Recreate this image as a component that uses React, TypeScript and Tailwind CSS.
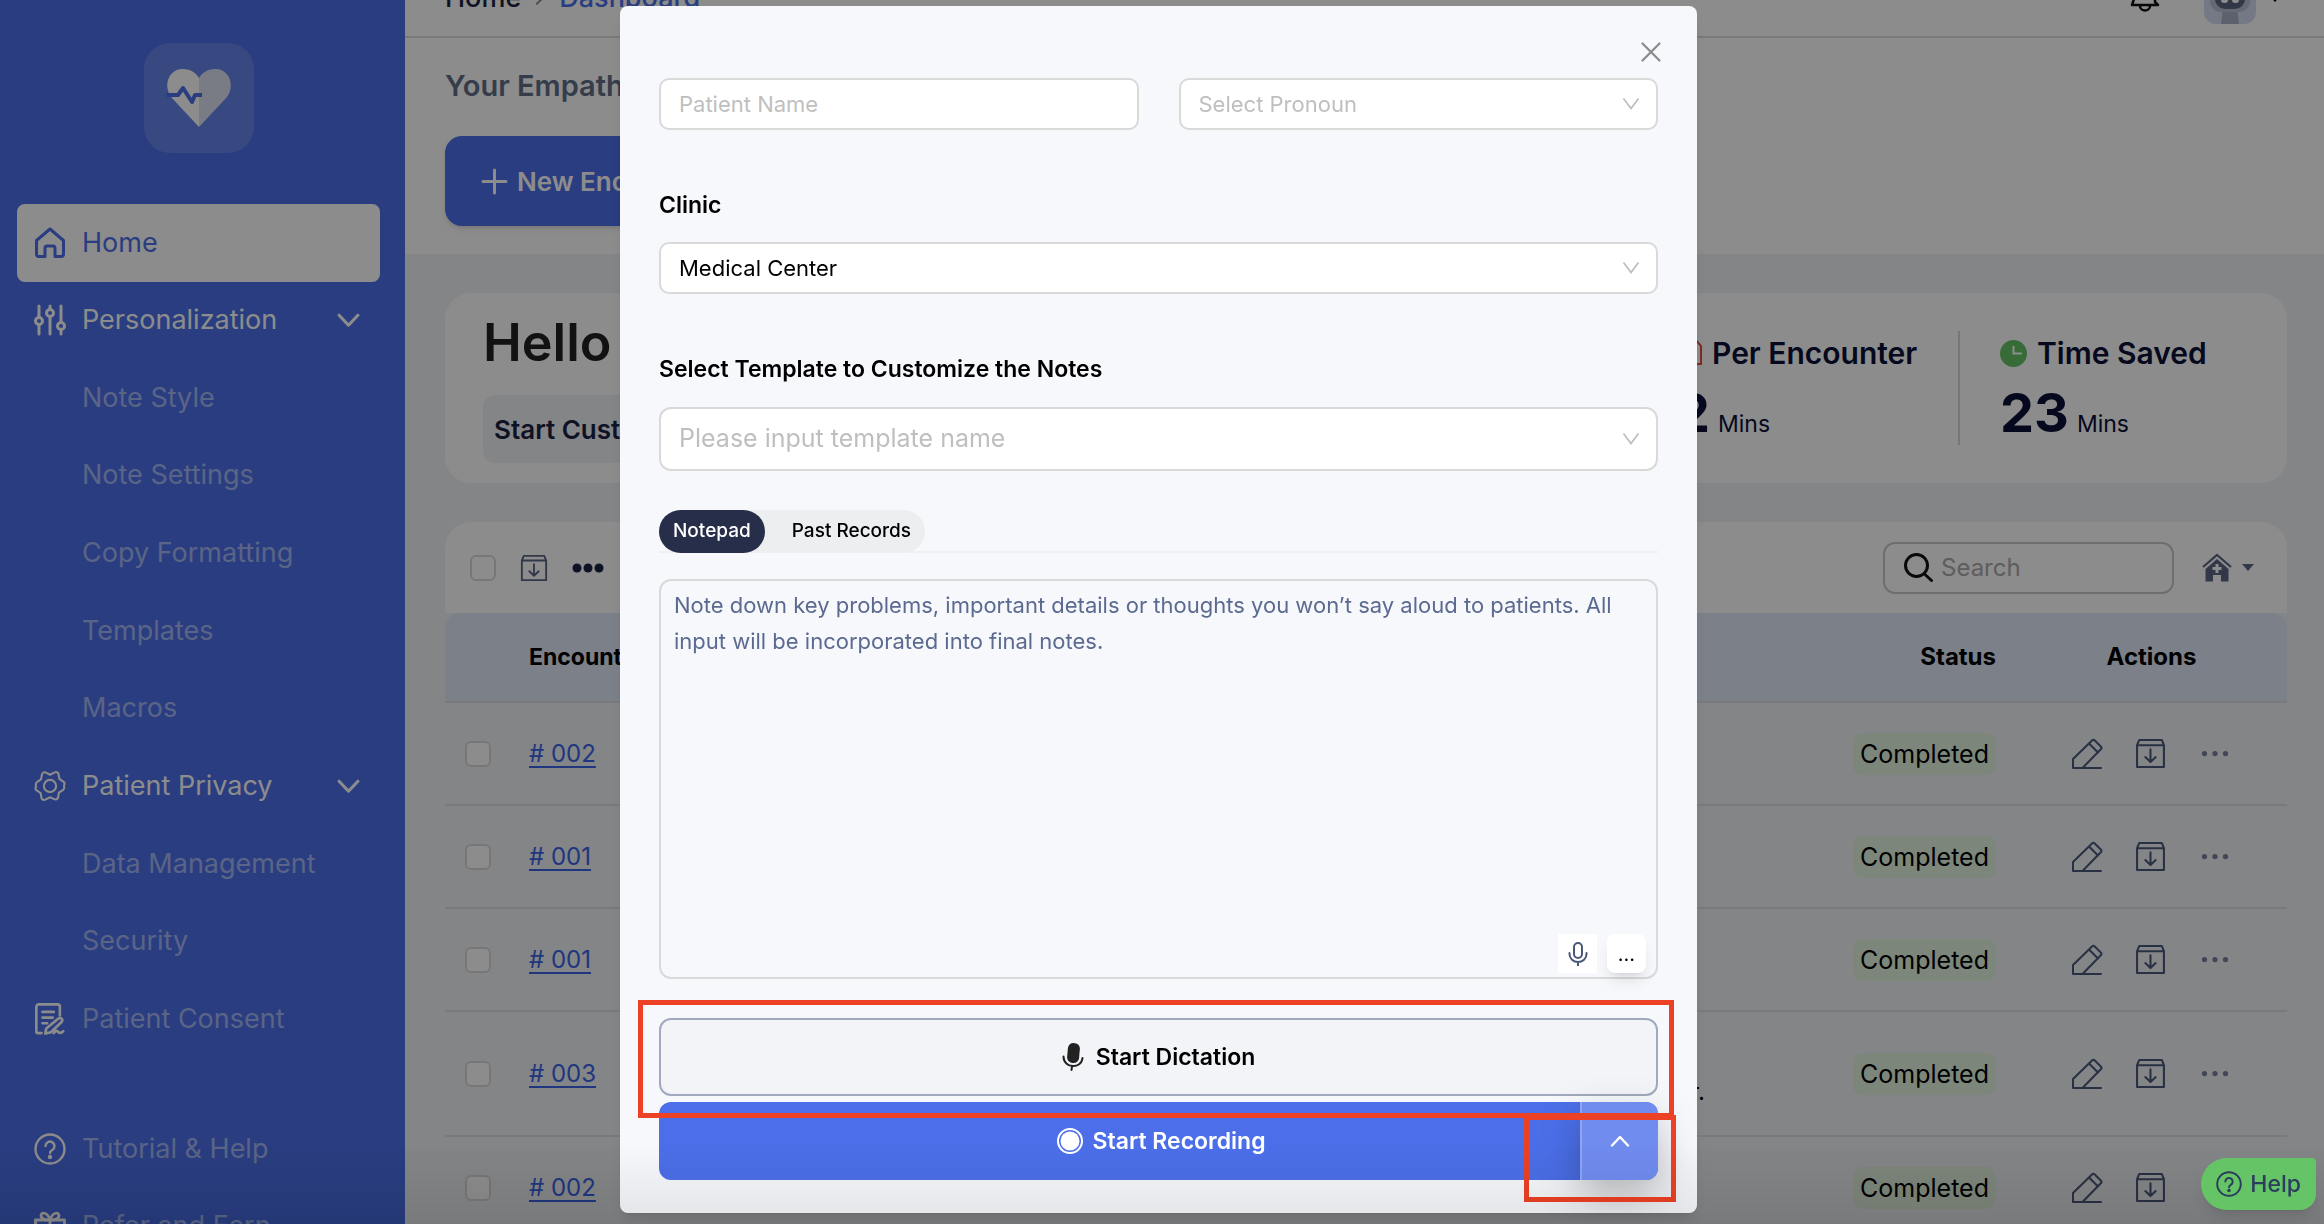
import type { ReactNode } from 'react';
import clsx from 'clsx';

interface NavItem {
  label: string;
  icon?: ReactNode;
  kind: 'active' | 'group' | 'sub' | 'link';
}

interface Encounter {
  id: string;
  summary?: string;
  tall?: boolean;
}

interface IconProps {
  className?: string;
}

function HomeIcon({ className }: IconProps) {
  return (
    <svg className={className} viewBox="0 0 32 32" fill="none" stroke="currentColor" strokeWidth={3} strokeLinejoin="round">
      <path d="M2.5 13.5 16 2l13.5 11.5V27a2.5 2.5 0 0 1-2.5 2.5h-6V21a2 2 0 0 0-2-2h-6a2 2 0 0 0-2 2v8.500H5A2.500 2.500 0 0 1 2.500 27Z" />
    </svg>
  );
}

function SlidersIcon({ className }: IconProps) {
  return (
    <svg className={className} viewBox="0 0 32 32" fill="none" stroke="currentColor" strokeWidth={3} strokeLinecap="round">
      <path d="M5 2v11M5 21v9M16 2v3M16 13v17M27 2v16M27 26v4" />
      <circle cx="5" cy="17" r="3.500" />
      <circle cx="16" cy="9" r="3.500" />
      <circle cx="27" cy="22" r="3.500" />
    </svg>
  );
}

function GearIcon({ className }: IconProps) {
  return (
    <svg className={className} viewBox="0 0 34 34" fill="none" stroke="currentColor" strokeWidth={2.2} strokeLinejoin="round">
      <path d="M12 2.500 17 5l5-2.500a3 3 0 0 1 4 1.500l1 5.500 4.500 3A3 3 0 0 1 32 16v2a3 3 0 0 1-1 3l-4.500 3-1 5.500a3 3 0 0 1-4 1.500L17 29l-5 2.500a3 3 0 0 1-4-1.500l-1-5.500-4.500-3A3 3 0 0 1 2 18v-2a3 3 0 0 1 1-3l4.500-3 1-5.500a3 3 0 0 1 3.500-2Z" />
      <circle cx="17" cy="17" r="6.500" />
    </svg>
  );
}

function ConsentIcon({ className }: IconProps) {
  return (
    <svg className={className} viewBox="0 0 32 34" fill="none" stroke="currentColor" strokeWidth={2.8} strokeLinecap="round" strokeLinejoin="round">
      <path d="M7 32H3a1.500 1.500 0 0 1-1.500-1.500V4A2.500 2.500 0 0 1 4 1.500h20A2.500 2.500 0 0 1 26.500 4v9" />
      <path d="M8 9.500h12M8 15.500h11M8 21.500h5" />
      <path d="m12 27 13-10.500a2.500 2.500 0 0 1 3.500 3.500L17 31l-6 1.500Z" />
      <path d="M20 32c2-3 3.500-3 5-1 1.500 1.500 3 1 5-1" />
    </svg>
  );
}

function QuestionIcon({ className }: IconProps) {
  return (
    <svg className={className} viewBox="0 0 32 32" fill="none" stroke="currentColor" strokeWidth={2.4} strokeLinecap="round">
      <circle cx="16" cy="16" r="14.500" />
      <path d="M11.500 13a4.500 4.500 0 1 1 7 3.800c-1.700 1.100-2.500 1.800-2.500 3.200" />
      <circle cx="16" cy="24" r="1" fill="currentColor" />
    </svg>
  );
}

function GiftIcon({ className }: IconProps) {
  return (
    <svg className={className} viewBox="0 0 32 32" fill="none" stroke="currentColor" strokeWidth={2.8} strokeLinejoin="round">
      <path d="M1.500 10h29v6h-29ZM4 16h24v14H4ZM16 10v20" />
      <path d="M16 10c-6 0-9-1.500-9-4.500S13 1 16 10Zm0 0c6 0 9-1.500 9-4.500S19 1 16 10Z" />
    </svg>
  );
}

function ChevronIcon({ className }: IconProps) {
  return (
    <svg className={className} viewBox="0 0 22 14" fill="none" stroke="currentColor" strokeWidth={3} strokeLinecap="round" strokeLinejoin="round">
      <path d="m2 2 9 9.500L20 2" />
    </svg>
  );
}

function ThinChevron({ className }: IconProps) {
  return (
    <svg className={className} viewBox="0 0 18 14" fill="none" stroke="currentColor" strokeWidth={1.8}>
      <path d="m1.500 1.500 7.500 10 7.500-10" />
    </svg>
  );
}

function ArchiveIcon({ className }: IconProps) {
  return (
    <svg className={className} viewBox="0 0 30 30" fill="none" stroke="currentColor" strokeWidth={2} strokeLinejoin="round" strokeLinecap="round">
      <path d="M2 7h26v21H2ZM2 7l2-5h22l2 5" />
      <path d="M15 11v12M10 18.500l5 4.800 5-4.800" />
    </svg>
  );
}

function PencilIcon({ className }: IconProps) {
  return (
    <svg className={className} viewBox="0 0 32 32" fill="none" stroke="currentColor" strokeWidth={2} strokeLinejoin="round" strokeLinecap="round">
      <path d="M30 30H2v-9L21 2.500a2 2 0 0 1 2.800 0l6 6a2 2 0 0 1 0 2.800L11.500 30M18 5.500l9 9" />
    </svg>
  );
}

function DotsIcon({ className }: IconProps) {
  return (
    <svg className={className} viewBox="0 0 32 8" fill="currentColor">
      <circle cx="4" cy="4" r="3" />
      <circle cx="16" cy="4" r="3" />
      <circle cx="28" cy="4" r="3" />
    </svg>
  );
}

function Caret({ className }: IconProps) {
  return (
    <svg className={className} viewBox="0 0 12 7" fill="currentColor">
      <path d="M0 0h12L6 7Z" />
    </svg>
  );
}

const navItems: NavItem[] = [
  { label: 'Home', kind: 'active', icon: <HomeIcon className="size-8" /> },
  { label: 'Personalization', kind: 'group', icon: <SlidersIcon className="size-8" /> },
  { label: 'Note Style', kind: 'sub' },
  { label: 'Note Settings', kind: 'sub' },
  { label: 'Copy Formatting', kind: 'sub' },
  { label: 'Templates', kind: 'sub' },
  { label: 'Macros', kind: 'sub' },
  { label: 'Patient Privacy', kind: 'group', icon: <GearIcon className="size-8" /> },
  { label: 'Data Management', kind: 'sub' },
  { label: 'Security', kind: 'sub' },
  { label: 'Patient Consent', kind: 'link', icon: <ConsentIcon className="size-8" /> },
];

const footerItems: NavItem[] = [
  { label: 'Tutorial & Help', kind: 'link', icon: <QuestionIcon className="size-8" /> },
  { label: 'Refer and Earn', kind: 'link', icon: <GiftIcon className="size-8" /> },
];

const encounters: Encounter[] = [
  { id: '# 002' },
  { id: '# 001' },
  { id: '# 001' },
  { id: '# 003', summary: 'r.', tall: true },
  { id: '# 002' },
];

function NavRow({ item }: { item: NavItem }) {
  return (
    <li className="flex flex-1">
      <a
        href="#"
        className={clsx(
          'flex flex-1 items-center gap-4 rounded-lg pr-4 pl-[17px] text-[27px]',
          item.kind === 'active' && 'bg-white text-[#4c6fe9]',
          item.kind === 'group' && 'text-white',
          (item.kind === 'sub' || item.kind === 'link') && 'text-white/50'
        )}
      >
        <span className={clsx('w-8 shrink-0', item.kind !== 'active' && 'text-white')}>{item.icon}</span>
        <span className="flex-1 whitespace-nowrap">{item.label}</span>
        {item.kind === 'group' && <ChevronIcon className="mr-1 h-[15px] w-[23px]" />}
      </a>
    </li>
  );
}

function Sidebar() {
  return (
    <aside className="flex w-[405px] shrink-0 flex-col bg-[#4c6fe9] pr-[25px] pl-[17px]">
      <div className="mt-[43px] ml-[127px] flex size-[110px] shrink-0 items-center justify-center rounded-[26px] bg-white/15">
        <svg className="h-[58px] w-[66px]" viewBox="0 0 66 58">
          <path d="M33 58 5 28C-3 17 2 0 17 0c8 0 13 4 16 9Z" fill="#fff" />
          <path d="m33 58 28-30C69 17 64 0 49 0c-8 0-13 4-16 9Z" fill="#dfe2f2" />
          <path d="M0 26h12l5-7 9 14 3-7h7" fill="none" stroke="#4c6fe9" strokeWidth="4" strokeLinejoin="round" />
        </svg>
      </div>
      <ul className="mt-[51px] flex h-[854px] shrink-0 flex-col">
        {navItems.map((item) => (
          <NavRow key={item.label} item={item} />
        ))}
      </ul>
      <ul className="mt-[52px] flex h-[155px] shrink-0 flex-col">
        {footerItems.map((item) => (
          <NavRow key={item.label} item={item} />
        ))}
      </ul>
    </aside>
  );
}

function TopBar() {
  return (
    <header className="-mt-10 flex h-[78px] shrink-0 items-center border-b-2 border-[#dedede] bg-white pr-[42px] pl-10 text-[27px] font-medium">
      <nav className="flex flex-1 items-center gap-3">
        <a href="#" className="text-[#1d2440]">Home</a>
        <ChevronIcon className="h-3 w-[14px] -rotate-90 text-[#8c8c8c]" />
        <a href="#" className="text-[#4c6fe9]">Dashboard</a>
      </nav>
      <button aria-label="Notifications" className="mr-11">
        <svg className="h-[28px] w-[30px]" viewBox="0 0 30 28" fill="none" stroke="#111" strokeWidth="2.500" strokeLinejoin="round">
          <path d="M5 12a10 10 0 0 1 20 0v6l3 3H2Z" />
          <path d="M10 22a5 4.500 0 0 0 10 0" />
        </svg>
      </button>
      <button aria-label="Account" className="flex items-center gap-3">
        <svg className="size-[52px] rounded-xl" viewBox="0 0 52 52">
          <rect width="52" height="52" fill="#d5ddf5" />
          <path d="M19 36h14l2 16H17Z" fill="#a9b1c6" />
          <rect x="6" y="16" width="40" height="24" rx="11" fill="#b9c0d0" />
          <rect x="11" y="14" width="30" height="23" rx="10" fill="#5b6680" />
          <rect x="17" y="20" width="7" height="11" rx="3" fill="#fff" />
          <rect x="28" y="20" width="7" height="11" rx="3" fill="#fff" />
        </svg>
        <Caret className="h-[10px] w-[14px]" />
      </button>
    </header>
  );
}

function Stat({ title, value, icon }: { title: string; value: string; icon: ReactNode }) {
  return (
    <div className="pt-[6px] text-[#0b1038]">
      <div className="flex items-center gap-[10px] text-[30px] leading-[44px] font-semibold whitespace-nowrap">
        {icon}
        {title}
      </div>
      <div className="flex items-baseline gap-2">
        <span className="text-[54px] leading-[76px] font-bold">{value}</span>
        <span className="text-[23px]">Mins</span>
      </div>
    </div>
  );
}

function Summary() {
  return (
    <section className="flex h-[190px] shrink-0 items-center rounded-[26px] bg-white">
      <div className="flex-1 pl-[38px]">
        <h1 className="text-[52px] leading-[60px] font-semibold text-[#222]">Hello</h1>
        <button className="mt-[22px] flex h-[68px] w-[300px] items-center rounded-xl bg-[#f0f2f6] px-[11px] text-[26px] font-semibold whitespace-nowrap text-[#1b2244]">
          Start Custom
        </button>
      </div>
      <div className="w-[282px] shrink-0">
        <Stat
          title="Per Encounter"
          value="2"
          icon={
            <svg className="h-[32px] w-[26px]" viewBox="0 0 26 32" fill="none" stroke="#e8503a" strokeWidth="2">
              <path d="M4 30V2h15l6 7v18h-5v3Z M9 26V12M20 12v15" />
            </svg>
          }
        />
      </div>
      <div className="h-[114px] border-l-2 border-[#d9d9d9] pl-10" />
      <div className="w-[287px] shrink-0">
        <Stat
          title="Time Saved"
          value="23"
          icon={
            <svg className="size-[27px]" viewBox="0 0 27 27">
              <circle cx="13.500" cy="13.500" r="13.500" fill="#64c466" />
              <path d="M13.500 6v7.500H22" fill="none" stroke="#fff" strokeWidth="2" />
            </svg>
          }
        />
      </div>
    </section>
  );
}

function Checkbox({ label }: { label: string }) {
  return (
    <input
      type="checkbox"
      aria-label={label}
      className="block size-[26px] appearance-none rounded-md border-2 border-[#d9d9d9] bg-white"
    />
  );
}

function EncounterTable() {
  return (
    <section className="shrink-0 rounded-t-[26px] bg-white">
      <div className="flex h-[91px] items-center pr-[33px] pl-[25px] text-[#5b6785]">
        <Checkbox label="Select all" />
        <button aria-label="Archive" className="ml-6">
          <ArchiveIcon className="size-[28px]" />
        </button>
        <button aria-label="More" className="ml-6 text-[#1b2244]">
          <svg className="h-[10px] w-8" viewBox="0 0 32 10" fill="currentColor">
            <circle cx="5" cy="5" r="4.500" />
            <circle cx="16" cy="5" r="4.500" />
            <circle cx="27" cy="5" r="4.500" />
          </svg>
        </button>
        <label className="ml-auto flex h-[52px] w-[291px] items-center gap-2 rounded-xl border-2 border-[#c9c9c9] px-[19px]">
          <svg className="size-[29px] shrink-0" viewBox="0 0 29 29" fill="none" stroke="#111" strokeWidth="3" strokeLinecap="round">
            <circle cx="12.500" cy="12.500" r="11" />
            <path d="m20.500 21 7 6.500" />
          </svg>
          <span className="sr-only">Search</span>
          <input type="search" placeholder="Search" className="min-w-0 flex-1 text-[24px] outline-none placeholder:text-[#aaa]" />
        </label>
        <button aria-label="Clinic" className="ml-7 flex items-center gap-[10px]">
          <svg className="size-[30px]" viewBox="0 0 30 30" fill="currentColor">
            <path d="M1 14 15 2l14 12" fill="none" stroke="currentColor" strokeWidth="2.200" />
            <path d="M15 6 3.500 16v12.500H11V22h8v6.500h7.500V16Zm-1.500 5h3v3h3v3h-3v3h-3v-3h-3v-3h3Z" fillRule="evenodd" />
          </svg>
          <Caret className="h-[7px] w-3" />
        </button>
      </div>
      <table className="w-full table-fixed border-separate border-spacing-0 bg-[#f0f2f6] text-[24px]">
        <colgroup>
          <col className="w-[84px]" />
          <col className="w-[200px]" />
          <col />
          <col className="w-[291px]" />
          <col className="w-[291px]" />
        </colgroup>
        <thead>
          <tr className="h-[90px] text-black">
            <th className="rounded-tl-2xl border-b-2 border-[#dcdfe5] bg-[#e1e9f9]" />
            <th className="border-b-2 border-[#dcdfe5] bg-[#e1e9f9] text-left text-[23px] font-bold">Encounter</th>
            <th className="border-b-2 border-[#dcdfe5] bg-[#e1e9f9]" />
            <th className="border-b-2 border-[#dcdfe5] bg-[#e1e9f9] text-right text-[24px] font-bold">Status</th>
            <th className="rounded-tr-2xl border-b-2 border-[#dcdfe5] bg-[#e1e9f9] pl-5 text-[24px] font-bold">Actions</th>
          </tr>
        </thead>
        <tbody>
          {encounters.map((row, index) => (
            <tr key={index} className={row.tall ? 'h-[125px]' : 'h-[103px]'}>
              <td className="border-b-2 border-[#dcdfe5] pl-5">
                <Checkbox label={`Select encounter ${row.id}`} />
              </td>
              <td className="border-b-2 border-[#dcdfe5]">
                <a href="#" className="text-[#3b63e6] underline decoration-2 underline-offset-4">{row.id}</a>
              </td>
              <td className="border-b-2 border-[#dcdfe5] pt-9 text-right">{row.summary}</td>
              <td className="border-b-2 border-[#dcdfe5] text-right">
                <span className="inline-block rounded-[10px] bg-[#e3f4e0] px-[7px] text-[25px] leading-[42px] text-black">Completed</span>
              </td>
              <td className="border-b-2 border-[#dcdfe5]">
                <div className="ml-[75px] flex items-center text-[#4a587a]">
                  <button aria-label="Edit">
                    <PencilIcon className="size-[32px]" />
                  </button>
                  <button aria-label="Archive" className="ml-8">
                    <ArchiveIcon className="size-[31px]" />
                  </button>
                  <button aria-label="More" className="ml-[35px] text-[#76819c]">
                    <DotsIcon className="h-[7px] w-[28px]" />
                  </button>
                </div>
              </td>
            </tr>
          ))}
        </tbody>
      </table>
    </section>
  );
}

function Dashboard() {
  return (
    <main className="flex min-w-0 flex-1 flex-col">
      <TopBar />
      <section className="h-[216px] shrink-0 bg-white pt-[27px] pl-10">
        <h2 className="text-[29px] leading-[42px] font-semibold text-[#616e87]">Your Empathetic AI</h2>
        <button className="mt-[29px] flex h-[90px] items-center gap-[9px] rounded-[17px] bg-[#4c6fe9] px-9 text-[26px] font-semibold text-white shadow-md">
          <svg className="size-[27px]" viewBox="0 0 27 27" stroke="currentColor" strokeWidth="3" strokeLinecap="round">
            <path d="M13.500 2v23M2 13.500h23" />
          </svg>
          New Encounter
        </button>
      </section>
      <div className="flex flex-col gap-[39px] bg-[#f0f2f6] pt-[39px] pr-[37px] pl-10">
        <Summary />
        <EncounterTable />
      </div>
    </main>
  );
}

interface SelectFieldProps {
  id: string;
  label: string;
  value: string;
  className?: string;
  large?: boolean;
}

function SelectField({ id, label, value, className, large }: SelectFieldProps) {
  return (
    <div className="relative">
      <select
        id={id}
        aria-label={label}
        className={clsx(
          'block w-full appearance-none border-2 border-[#d9d9d9] bg-white px-[18px]',
          large ? 'h-[64px] rounded-xl text-[25px]' : 'h-[52px] rounded-[10px] text-[22px]',
          className
        )}
      >
        <option>{value}</option>
      </select>
      <ThinChevron className="pointer-events-none absolute inset-y-0 right-[18px] my-auto h-[14px] w-[18px] text-[#bfbfbf]" />
    </div>
  );
}

function EncounterModal() {
  return (
    <div
      role="dialog"
      aria-label="New encounter"
      className="mt-[6px] flex w-[1077px] max-w-full flex-col self-start rounded-lg bg-[#f7f8fc] px-[39px] pb-[33px] text-black shadow-lg"
    >
      <div className="flex h-[72px] items-center justify-end pt-5">
        <button aria-label="Close" className="-mr-[3px] text-[#8a8a8a]">
          <svg className="size-5" viewBox="0 0 20 20" fill="none" stroke="currentColor" strokeWidth="2.200" strokeLinecap="round">
            <path d="m1.500 1.500 17 17M18.500 1.500l-17 17" />
          </svg>
        </button>
      </div>
      <div className="grid grid-cols-2 gap-10">
        <input
          aria-label="Patient Name"
          placeholder="Patient Name"
          className="h-[52px] rounded-[10px] border-2 border-[#d9d9d9] bg-white px-[18px] text-[22px] placeholder:text-[#bfbfbf]"
        />
        <SelectField id="pronoun" label="Select Pronoun" value="Select Pronoun" className="text-[#bfbfbf]" />
      </div>
      <label htmlFor="clinic" className="mt-[59px] mb-[21px] text-[23px] leading-8 font-semibold">
        Clinic
      </label>
      <SelectField id="clinic" label="Clinic" value="Medical Center" />
      <label htmlFor="template" className="mt-[59px] mb-[22px] text-[23px] leading-8 font-semibold">
        Select Template to Customize the Notes
      </label>
      <SelectField id="template" label="Template" value="Please input template name" large className="text-[#bfbfbf]" />
      <div className="mt-[39px] border-b-2 border-[#f0f0f0]">
        <div role="tablist" className="-mb-[2px] flex h-[43px] w-fit rounded-full bg-[#edeef0] text-[19px] font-medium">
          <button role="tab" aria-selected className="rounded-full bg-[#272e4a] px-[14px] text-white">
            Notepad
          </button>
          <button role="tab" aria-selected={false} className="pr-[14px] pl-[27px]">
            Past Records
          </button>
        </div>
      </div>
      <div className="relative mt-[26px]">
        <textarea
          aria-label="Notepad"
          placeholder="Note down key problems, important details or thoughts you won’t say aloud to patients. All input will be incorporated into final notes."
          className="block h-[400px] w-full resize-none rounded-xl border-2 border-[#d9d9d9] px-[13px] py-[6px] text-[22px] leading-9 placeholder:text-[#5b6a8f]"
        />
        <div className="absolute right-[12px] bottom-[6px] flex gap-[10px]">
          <button aria-label="Dictate" className="flex size-[39px] items-center justify-center bg-white text-[#4a587a]">
            <svg className="h-6 w-5" viewBox="0 0 20 24" fill="none" stroke="currentColor" strokeWidth="2" strokeLinecap="round">
              <rect x="6" y="1" width="8" height="15" rx="4" />
              <path d="M1.500 11v1a8.500 8 0 0 0 17 0v-1M10 20v3.500" />
            </svg>
          </button>
          <button aria-label="More" className="flex size-[39px] items-center justify-center rounded-lg bg-white text-[20px] shadow-lg">
            ...
          </button>
        </div>
      </div>
      <div className="relative mt-[39px] flex flex-col gap-[6px] text-[23px] font-semibold">
        <button className="flex h-[78px] items-center justify-center gap-[12px] rounded-xl border-2 border-[#a0a9bd] bg-[#f3f4f8]">
          <svg className="h-[28px] w-[22px]" viewBox="0 0 22 28" fill="none" stroke="#222" strokeWidth="2" strokeLinecap="round">
            <rect x="5.500" y="0" width="12" height="20" rx="5.500" fill="#222" stroke="none" transform="rotate(5 11 10)" />
            <path d="M1.500 13.500c0 12 18 13 19 1.500M10 23.500 9.500 27" />
          </svg>
          Start Dictation
        </button>
        <div className="flex h-[78px] rounded-xl bg-[#4c6fe9] text-white">
          <button className="flex flex-1 items-center justify-center gap-[9px] pl-[84px]">
            <svg className="size-[26px]" viewBox="0 0 26 26" fill="none" stroke="#fff" strokeWidth="2">
              <circle cx="13" cy="13" r="12" />
              <circle cx="13" cy="13" r="9.500" fill="#fff" stroke="none" />
            </svg>
            Start Recording
          </button>
          <button
            aria-label="Recording options"
            className="flex w-[78px] items-center justify-center rounded-r-xl border-l-2 border-[#8fa5f3] bg-[#708cef] shadow-[0_16px_40px_rgba(0,0,0,0.25)]"
          >
            <svg className="h-3 w-5" viewBox="0 0 20 12" fill="none" stroke="currentColor" strokeWidth="2.400" strokeLinecap="round" strokeLinejoin="round">
              <path d="m2 10.500 8-8.500 8 8.500" />
            </svg>
          </button>
        </div>
        {/* callouts around the two actions */}
        <div className="pointer-events-none absolute -top-[18px] -right-[16px] -left-[21px] h-[118px] border-[5px] border-[#ec4125]" />
        <div className="pointer-events-none absolute top-[97px] -right-[18px] h-[87px] w-[152px] border-[5px] border-[#ec4125]" />
      </div>
    </div>
  );
}

export default function App() {
  return (
    <div className="relative flex h-screen overflow-hidden bg-[#f0f2f6] font-['Inter',sans-serif]">
      <Sidebar />
      <Dashboard />
      <div className="fixed inset-0 flex justify-center bg-black/45 pr-[7px]">
        <EncounterModal />
      </div>
      <div className="pointer-events-none fixed inset-x-0 bottom-0 h-20 bg-linear-to-b from-transparent to-black/8" />
      <button className="fixed right-2 bottom-[14px] flex h-[52px] items-center gap-2 rounded-l-[26px] rounded-tr-sm rounded-br-2xl bg-[#64c466] px-[15px] text-[23px] font-medium text-[#2c3c5e] shadow-lg">
        <QuestionIcon className="size-[26px]" />
        Help
      </button>
    </div>
  );
}
